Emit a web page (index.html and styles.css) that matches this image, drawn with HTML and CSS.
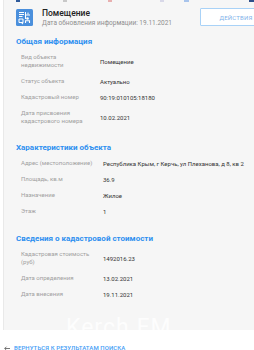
FILE: index.html
```html
<!DOCTYPE html>
<html lang="ru">
<head>
<meta charset="utf-8">
<link rel="stylesheet" href="styles.css">
</head>
<body>
<div class="card">
  <div class="strip">
    <span class="m m1"></span><span class="m m2"></span><span class="m m3"></span><span class="m m4"></span><span class="m m5"></span><span class="m m6"></span>
  </div>
  <div class="header">
    <svg class="icon" width="17" height="17" viewBox="0 0 17 17">
      <rect x="0" y="0" width="17" height="17" rx="1.5" fill="#4a8fdc"/>
      <path d="M3 3.5h5M3 5.5h5M3 7.5h3.5M9.5 3v7M9.5 6h4.5M12 3.5v2" stroke="#fff" stroke-width="1" fill="none"/>
      <path d="M3 10h4v3.5H3z" stroke="#fff" stroke-width="1" fill="none"/>
      <circle cx="11.5" cy="9.5" r="1.3" fill="#fff"/>
      <path d="M9.5 14v-2.2h4V14" stroke="#fff" stroke-width="1.1" fill="none"/>
      <path d="M5 13.5l1.5 2 1-2" fill="#fff"/>
    </svg>
    <div class="htext">
      <div class="title">Помещение</div>
      <div class="sub">Дата обновления информации: 19.11.2021</div>
    </div>
    <button class="actions">Действия</button>
  </div>

  <section class="sec s1">
    <h2>Общая информация</h2>
    <div class="grid g1">
      <div class="lbl">Вид объекта недвижимости</div><div class="val">Помещение</div>
      <div class="lbl">Статус объекта</div><div class="val">Актуально</div>
      <div class="lbl">Кадастровый номер</div><div class="val">90:19:010105:18180</div>
      <div class="lbl">Дата присвоения кадастрового номера</div><div class="val">10.02.2021</div>
    </div>
  </section>

  <section class="sec s2">
    <h2>Характеристики объекта</h2>
    <div class="grid g2">
      <div class="lbl">Адрес (местоположение)</div><div class="val">Республика Крым, г Керчь, ул Плеханова, д 8, кв 2</div>
      <div class="lbl">Площадь, кв.м</div><div class="val">36.9</div>
      <div class="lbl">Назначение</div><div class="val">Жилое</div>
      <div class="lbl">Этаж</div><div class="val">1</div>
    </div>
  </section>

  <section class="sec s3">
    <h2>Сведения о кадастровой стоимости</h2>
    <div class="grid g2">
      <div class="lbl">Кадастровая стоимость (руб)</div><div class="val">1492016.23</div>
      <div class="lbl">Дата определения</div><div class="val">13.02.2021</div>
      <div class="lbl">Дата внесения</div><div class="val">19.11.2021</div>
    </div>
  </section>
</div>
<a class="back" href="#"><svg class="arrow" width="6" height="5" viewBox="0 0 6 5"><path d="M6 2.5H0.8M2.5 0.7L0.7 2.5L2.5 4.3" stroke="#555" stroke-width="0.8" fill="none"/></svg>Вернуться к результатам поиска</a>
<div class="wm">Kerch.FM</div>
</body>
</html>
```

FILE: styles.css
```css
html, body {
  margin: 0;
  padding: 0;
  overflow: hidden;
  background: #fff;
  font-family: Roboto, "Noto Sans", sans-serif;
}
body {
  width: 254px;
  height: 350px;
  position: relative;
}
.card {
  margin-left: 3px;
  width: 251px;
  overflow: hidden;
  background: #f6f6f6;
  border-left: 1px solid #e9e9e9;
  padding: 0 0 28px 12px;
  box-sizing: border-box;
}
.strip {
  height: 2px;
  display: flex;
}
.m { height: 2px; display: block; flex: none; }
.m1 { margin-left: 0px; width: 4px; background: #2f5a9a; }
.m2 { margin-left: 43px; width: 4px; background: #c8c8c8; }
.m3 { margin-left: 41px; width: 4px; background: #e8b0b0; }
.m4 { margin-left: 48px; width: 4px; background: #d8d8e8; }
.m5 { margin-left: 20px; width: 5px; background: #a8c4ec; }
.m6 { margin-left: 60px; width: 9px; background: #2f4f8a; }
.header {
  display: flex;
  align-items: flex-start;
  padding-top: 6px;
}
.icon {
  margin-top: 1px;
  flex: none;
}
.htext {
  margin-left: 9px;
  width: 153px;
  flex: none;
}
.title {
  font-size: 8.5px;
  line-height: 10px;
  font-weight: 500;
  color: #222;
}
.sub {
  margin-top: 1px;
  font-size: 6.5px;
  line-height: 8px;
  color: #8e8e8e;
}
.actions {
  flex: none;
  margin-left: 5px;
  width: 72px;
  height: 18px;
  background: #fff;
  border: 1px solid #a9d2f7;
  border-radius: 1px;
  font-family: Roboto, sans-serif;
  font-size: 6px;
  text-transform: uppercase;
  color: #7fb3ea;
  letter-spacing: 0.2px;
  padding: 0;
}
.sec h2 {
  margin: 0;
  font-size: 8px;
  line-height: 10px;
  font-weight: 700;
  color: #2d8ff0;
}
.s1 { margin-top: 10px; }
.s2 { margin-top: 14px; }
.s3 { margin-top: 15px; }
.grid {
  display: grid;
  margin-top: 2px;
  padding-left: 5px;
  align-items: center;
}
.g1 { grid-template-columns: 79px 1fr; }
.g2 { grid-template-columns: 82px 1fr; }
.lbl {
  font-size: 6px;
  line-height: 8.5px;
  color: #a0a0a0;
  padding: 3.5px 6px 3.5px 0;
}
.val {
  font-size: 6px;
  line-height: 9px;
  color: #333;
  padding: 3.5px 0;
  white-space: nowrap;
}
.back {
  display: flex;
  align-items: center;
  height: 6px;
  margin: 15px 0 0 4px;
  font-size: 6px;
  line-height: 6px;
  font-weight: 500;
  text-transform: uppercase;
  color: #3f9cf5;
  text-decoration: none;
  letter-spacing: 0.1px;
}
.arrow {
  flex: none;
  margin-right: 4px;
}
.wm {
  position: absolute;
  left: 66px;
  top: 314px;
  font-size: 23px;
  font-weight: 400;
  color: rgba(255, 255, 255, 0.8);
  letter-spacing: 1px;
}
```
